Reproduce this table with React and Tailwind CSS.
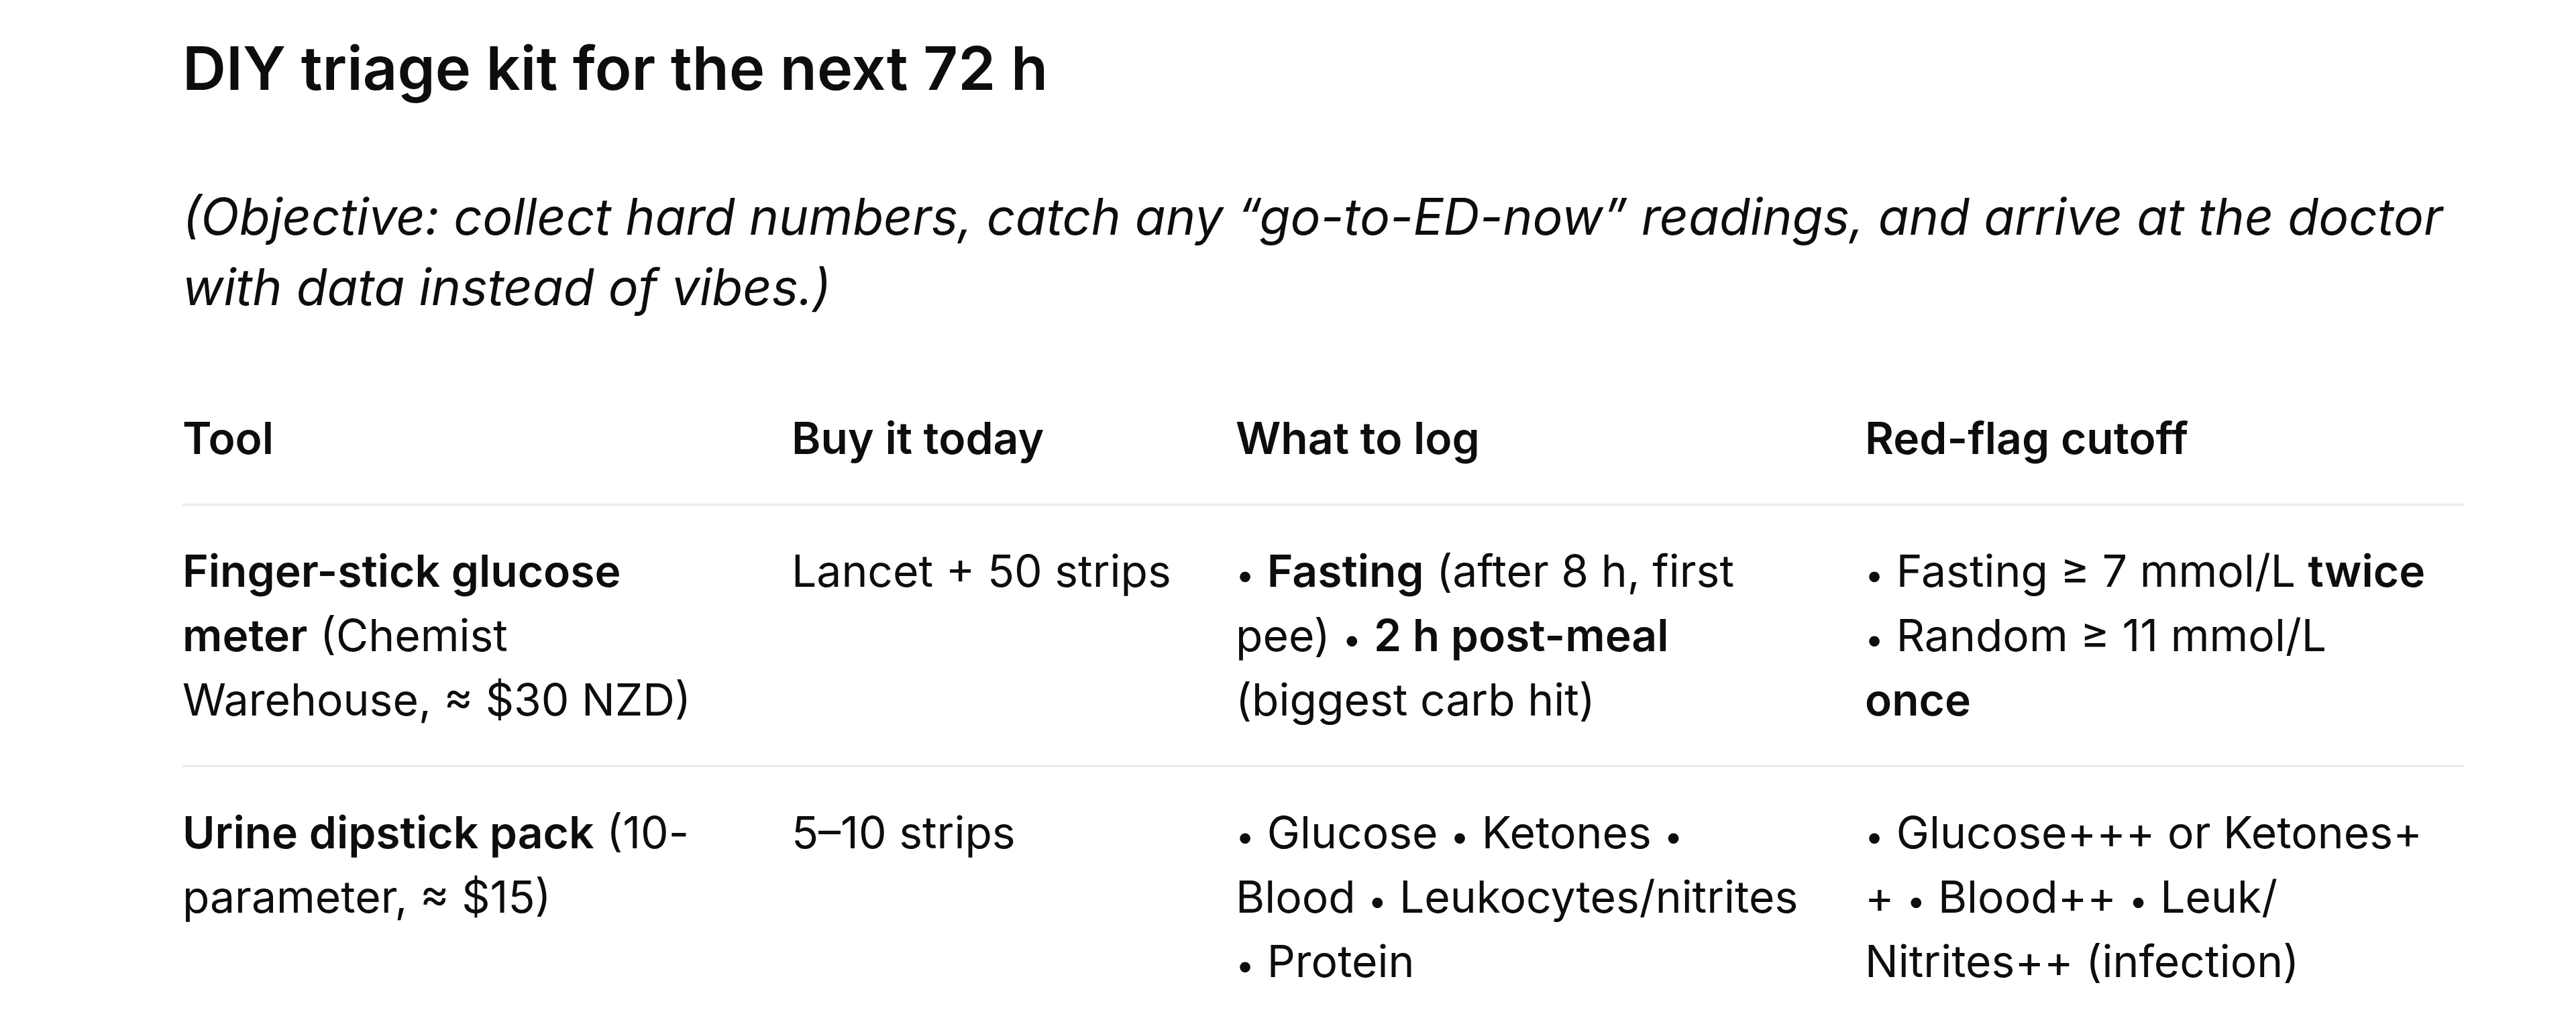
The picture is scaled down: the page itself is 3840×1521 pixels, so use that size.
import React from 'react'

const cols = [
  { w: 'w-[908px]', pad: 'pr-[60px]' },
  { w: 'w-[662px]', pad: 'pr-[60px]' },
  { w: 'w-[938px]', pad: 'pr-[88px]' },
  { w: 'w-[893px]', pad: 'pr-[43px]' },
]

const headers = ['Tool', 'Buy it today', 'What to log', 'Red-flag cutoff']

const Dot = () => <span className="text-[50px] leading-none">•</span>
const B = ({ children }) => <strong className="font-semibold">{children}</strong>

const rows = [
  [
    <><B>Finger-stick glucose meter</B> (Chemist Warehouse, ≈ $30 NZD)</>,
    <>Lancet + 50 strips</>,
    <><Dot /> <B>Fasting</B> (after 8 h, first pee) <Dot /> <B>2 h post-meal</B> (biggest carb hit)</>,
    <><Dot /> Fasting ≥ 7 mmol/L <B>twice</B> <Dot /> Random ≥ 11 mmol/L <B>once</B></>,
  ],
  [
    <><B>Urine dipstick pack</B> (10-parameter, ≈ $15)</>,
    <>5–10 strips</>,
    <><Dot /> Glucose <Dot /> Ketones <Dot /> Blood <Dot /> Leukocytes/nitrites <Dot /> Protein</>,
    <><Dot /> Glucose+++ or Ketones+<wbr />+ <Dot /> Blood++ <Dot /> Leuk/<wbr />Nitrites++ (infection)</>,
  ],
]

export default function App() {
  return (
    <div className="h-[1521px] overflow-hidden bg-white text-[#0d0d0d] pl-[272px] pt-[48px]" style={{ fontFamily: 'Inter, "Noto Sans", sans-serif' }}>
      <h1 className="text-[90px] leading-[108px] font-semibold">DIY triage kit for the next 72 h</h1>

      <p className="mt-[114px] text-[75px] leading-[105px] italic w-[3420px]">
        (Objective: collect hard numbers, catch any “go-to-ED-now” readings, and arrive at the doctor with data instead of vibes.)
      </p>

      <table className="mt-[75px] table-fixed border-collapse w-[3401px] text-[66px] leading-[96px]">
        <colgroup>
          {cols.map((c, i) => <col key={i} className={c.w} />)}
        </colgroup>
        <thead>
          <tr className="border-b-[3px] border-[#ebebeb]">
            {headers.map((h, i) => (
              <th key={h} className={`text-left font-semibold align-top pt-[50px] pb-[50px] ${cols[i].pad}`}>{h}</th>
            ))}
          </tr>
        </thead>
        <tbody>
          {rows.map((r, ri) => (
            <tr key={ri} className={ri < rows.length - 1 ? 'border-b-[3px] border-[#ebebeb]' : ''}>
              {r.map((cell, ci) => (
                <td key={ci} className={`align-top pt-[49px] pb-[50px] ${cols[ci].pad}`}>{cell}</td>
              ))}
            </tr>
          ))}
        </tbody>
      </table>
    </div>
  )
}
